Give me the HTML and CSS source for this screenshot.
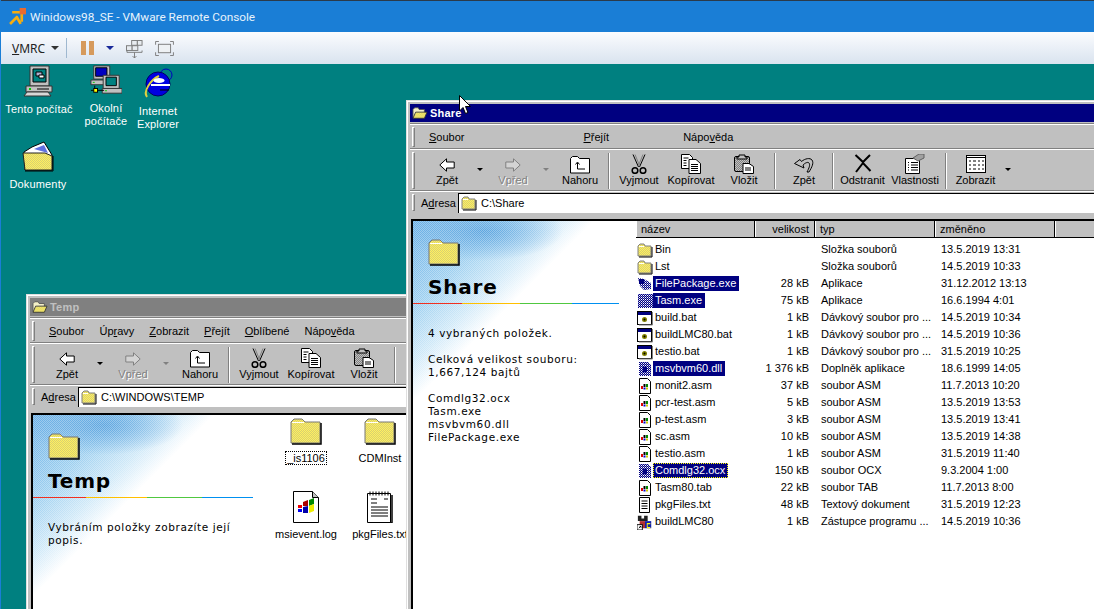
FILE: index.html
```
<!DOCTYPE html>
<html lang="cs">
<head>
<meta charset="utf-8">
<title>Winidows98_SE - VMware Remote Console</title>
<link rel="stylesheet" href="styles.css">
</head>
<body>
<svg class="defs" aria-hidden="true">
  <defs>
    <pattern id="dy" width="2" height="2" patternUnits="userSpaceOnUse"><rect width="2" height="2" fill="#fff060"/><rect width="1" height="1" fill="#d8d070"/><rect x="1" y="1" width="1" height="1" fill="#d8d070"/></pattern>
    <pattern id="db" width="2" height="2" patternUnits="userSpaceOnUse"><rect width="2" height="2" fill="#000080"/><rect width="1" height="1" fill="#fff"/><rect x="1" y="1" width="1" height="1" fill="#9090d0"/></pattern>
    <pattern id="dgray" width="2" height="2" patternUnits="userSpaceOnUse"><rect width="2" height="2" fill="#808080"/><rect width="1" height="1" fill="#c0c0c0"/><rect x="1" y="1" width="1" height="1" fill="#c0c0c0"/></pattern>
    <symbol id="folder" viewBox="0 0 16 16"><path d="M1 14V4l2-2h4l1 2h6v10z" fill="url(#dy)" stroke="#808080"/><path d="M2 15h13V5" fill="none" stroke="#000"/><path d="M2 4.500h5" stroke="#fff"/></symbol>
    <symbol id="folder-open" viewBox="0 0 18 16"><path d="M1 13V4l2-2h4l1 2h6v9z" fill="#f4f0c8" stroke="#555"/><path d="M1 14l3-7h13l-3 7z" fill="url(#dy)" stroke="#333"/></symbol>
    <symbol id="folder-big" viewBox="0 0 32 28"><path d="M1 26V5l3-3h8l3 3h15v21z" fill="url(#dy)" stroke="#777"/><path d="M2 5.500h12" stroke="#fff"/><path d="M2 27h29V6" fill="none" stroke="#000" stroke-width="1.500"/></symbol>
    <symbol id="back" viewBox="0 0 16 14"><path d="M.8 7L7.500.8v3.200h7.700v6H7.500v3.200z" fill="#fff" stroke="#000"/></symbol>
    <symbol id="fwd" viewBox="0 0 16 14"><path d="M15.200 7L8.500.8v3.200H.8v6h7.700v3.200z" fill="#d4d4d4" stroke="#808080"/></symbol>
    <symbol id="up" viewBox="0 0 20 18"><path d="M.5 17V2.500l2-2h5l2 2h10v14.500z" fill="#fff" stroke="#000"/><path d="M7.500 7v6H15M5.500 8.500l2-2.500 2 2.500" fill="none" stroke="#000"/></symbol>
    <symbol id="cut" viewBox="0 0 16 20"><g fill="none" stroke="#000"><path d="M2 .5l5.500 12.500M14 .5L8.500 13"/><path d="M4 .5l4.500 11M12 .5L7.500 11.500" stroke="#808080"/><circle cx="4" cy="16.500" r="2.800" stroke-width="1.500"/><circle cx="12" cy="16.500" r="2.800" stroke-width="1.500"/></g></symbol>
    <symbol id="copy" viewBox="0 0 20 20"><path d="M.5.500h8l3 3v11H.5z" fill="#fff" stroke="#000"/><path d="M8 5.500h7l4.500 4v10H8z" fill="#fff" stroke="#000"/><path d="M2.500 4h5M2.500 6.500h3M2.500 9h3M2.500 11.500h3M10 10.500h7M10 12.500h7M10 14.500h7M10 16.500h7" stroke="#000"/></symbol>
    <symbol id="paste" viewBox="0 0 20 20"><rect x=".5" y="2.500" width="15" height="15" rx="1.500" fill="url(#dgray)" stroke="#000"/><path d="M5 3V1h6v2h2v2H3V3z" fill="#c0c0c0" stroke="#000"/><path d="M9 9.500h6l4.500 3v7H9z" fill="#fff" stroke="#000"/><path d="M11 14h6M11 16h6" stroke="#000"/></symbol>
    <symbol id="undo" viewBox="0 0 20 16"><path d="M.5 6.500L6 2.500l1.500 2C11 1.500 16 .5 18 3c2 3 0 7-3 12h-2c2-4 3.500-7 2-9-1-1.500-4 0-6 2l1 3z" fill="#c0c0c0" stroke="#000"/></symbol>
    <symbol id="del" viewBox="0 0 18 18"><path d="M1.500.5L9 7.500 16 .5M2 17.500L9 8.500l7.500 8" fill="none" stroke="#000" stroke-width="2"/></symbol>
    <symbol id="props" viewBox="0 0 20 20"><path d="M.5 4.500h14v15H.5z" fill="#fff" stroke="#000"/><path d="M3 8.500h1M6 8.500h7M3 11h1M6 11h7M3 13.500h1M6 13.500h7M3 16h1M6 16h7" stroke="#000"/><path d="M8 4l6-4h5v4l-6 3z" fill="#a0a0a0" stroke="#606060"/></symbol>
    <symbol id="views" viewBox="0 0 20 18"><rect x=".5" y=".5" width="19" height="17" fill="#fff" stroke="#000"/><path d="M1 2.500h18" stroke="#000"/><path d="M3 6h2M7 6h3M12 6h2M16 6h2M3 10h2M7 10h3M12 10h2M16 10h2M3 14h2M7 14h3M12 14h2M16 14h2" stroke="#000"/></symbol>
    <symbol id="bat" viewBox="0 0 16 16"><rect x=".5" y="1.500" width="14" height="13" fill="#fff" stroke="#000"/><path d="M1 3.500h13" stroke="#000080" stroke-width="3"/><circle cx="7.500" cy="9.500" r="2.500" fill="#808000"/><circle cx="7.500" cy="9.500" r="1" fill="#000"/><path d="M15.500 2v13H2" fill="none" stroke="#808080"/></symbol>
    <symbol id="asm" viewBox="0 0 16 16"><path d="M2.500.5h8l3 3v12h-11z" fill="#fff" stroke="#000"/><path d="M4 8h2v3H4z" fill="#d00"/><path d="M6.500 6h2v3h-2z" fill="#000"/><path d="M9 6h2v3H9z" fill="#080"/><path d="M6.500 9.500h2v2h-2z" fill="#00c"/><path d="M9 9.500h2v2H9z" fill="#cc0"/></symbol>
    <symbol id="app" viewBox="0 0 16 16"><rect x="1" y="1" width="15" height="14" fill="url(#db)"/></symbol>
    <symbol id="pkg" viewBox="0 0 16 16"><path d="M1 2l6 1 7 4v6l-7 1-4-4z" fill="url(#db)"/><path d="M2 3h5v5H2z" fill="#000080"/></symbol>
    <symbol id="dll" viewBox="0 0 16 16"><path d="M2 1h9l3 3v11H2z" fill="url(#db)"/><path d="M6 6h4v5H6z" fill="#000080"/></symbol>
    <symbol id="txt" viewBox="0 0 16 16"><path d="M2.500.5h10v15h-10z" fill="#fff" stroke="#000"/><path d="M4.500 4h6M4.500 6.500h6M4.500 9h6M4.500 11.500h6" stroke="#000"/></symbol>
    <symbol id="lnk" viewBox="0 0 18 18"><path d="M1 2h4v3h3V2h4v6H1z" fill="#222"/><path d="M3 8h6v8H3z" fill="#b03030"/><path d="M9 8h7v8H9z" fill="#1020b0"/><path d="M11 10h4v1.500h-3v3h3V16h-4z" fill="#ff0"/><rect x="0" y="12" width="6" height="6" fill="#fff" stroke="#000"/><path d="M2 16l2-2M3 14h1.500v1.500" stroke="#000" fill="none"/></symbol>
    <symbol id="pc" viewBox="0 0 32 32"><path d="M7 1h19v20H7z" fill="#c0c0c0" stroke="#333"/><path d="M10 4h13v13H10z" fill="#008080" stroke="#000"/><path d="M13 7h6v4h-6z" fill="#b0b0d0" stroke="#000"/><path d="M16 10h5v3h-5z" fill="#fff" stroke="#000"/><path d="M3 21h26v6H3z" fill="#c0c0c0" stroke="#333"/><path d="M6 23h2v2H6z" fill="#0c0"/><path d="M14 24h12" stroke="#000"/><path d="M1 31l3-4h21l3 4z" fill="#d8d8d8" stroke="#333"/></symbol>
    <symbol id="net" viewBox="0 0 34 32"><path d="M4 1h17v14H4z" fill="#c0c0c0" stroke="#333"/><path d="M6 3h12v9H6z" fill="#0000c0" stroke="#000"/><path d="M1 16h20v5H1z" fill="#c0c0c0" stroke="#333"/><path d="M3 18h2v1H3z" fill="#0c0"/><path d="M14 11h17v14H14z" fill="#c0c0c0" stroke="#333"/><path d="M17 13h11v9H17z" fill="#008080" stroke="#000"/><path d="M13 25h21v5H13z" fill="#c0c0c0" stroke="#333"/><path d="M16 27h2v1h-2z" fill="#0c0"/><path d="M1 27h14" stroke="#000"/><path d="M5 22v4" stroke="#000"/><rect x="4" y="25" width="4" height="4" fill="#ff0" stroke="#000"/></symbol>
    <symbol id="ie" viewBox="0 0 32 32"><ellipse cx="24" cy="8" rx="6" ry="6" fill="none" stroke="#0000c0"/><circle cx="16" cy="17" r="12" fill="#0000e0" stroke="#000060"/><path d="M5 30c-4-5 3-17 12-21" fill="none" stroke="#e0d040" stroke-width="2"/><ellipse cx="17" cy="13.500" rx="5.500" ry="2.500" fill="#fff"/><path d="M9 18h19" stroke="#fff" stroke-width="2"/><path d="M18 23h9" stroke="#000" stroke-width="1"/></symbol>
    <symbol id="docs" viewBox="0 0 32 32"><path d="M2 12l8-5 12-5 8 13v15H3z" fill="#fff" stroke="#000"/><path d="M12 9l10-4 4 8z" fill="#6070e0"/><path d="M1 13h22l7 3v14H3z" fill="url(#dy)" stroke="#222"/><path d="M3 31h28V16" fill="none" stroke="#000"/></symbol>
    <symbol id="msi" viewBox="0 0 26 32"><path d="M.5.500h19l6 6v25H.5z" fill="#fff" stroke="#000"/><path d="M19.500.5v6h6" fill="#c0c0c0" stroke="#000"/><path d="M5 14h4v3H5z" fill="#e00"/><path d="M5 18h4v3H5z" fill="#00e"/><path d="M10 11l5-2v6h-5z" fill="#a00"/><path d="M16 9l5-2v6l-5 2z" fill="#080"/><path d="M10 16l5-1v7h-5z" fill="#00a"/><path d="M16 15l5-2v7l-5 2z" fill="#ee0"/></symbol>
    <symbol id="note" viewBox="0 0 26 32"><path d="M.5 2.500h23v29H.5z" fill="#fff" stroke="#000"/><path d="M25 4v28H3" fill="none" stroke="#000" stroke-width="1.500"/><path d="M3 .5v4M6 .5v4M9 .5v4M12 .5v4M15 .5v4M18 .5v4M21 .5v4" stroke="#000"/><path d="M4 8h6M17 8h4M4 12h6M4 16h17M4 19h17M4 22h17M4 25h17" stroke="#000"/></symbol>
    <symbol id="vmrc" viewBox="0 0 16 16"><path d="M1 15l7-7M3 4h9v9M7 8l4 7" fill="none" stroke="#f5ad10" stroke-width="2.500"/><rect x="10" y="0" width="6" height="6" fill="#e86a30"/></symbol>
    <symbol id="unity" viewBox="0 0 18 20"><g fill="#e8ecf0" stroke="#7a7a7a"><rect x="6" y=".5" width="6" height="5"/><rect x="12" y=".5" width="5" height="5"/><rect x=".5" y="6" width="6" height="5"/><rect x="6.500" y="6" width="6" height="5"/></g><path d="M1 11v2h16v-2M9 13v6M7 17l2 2 2-2" fill="none" stroke="#7a7a7a"/></symbol>
    <symbol id="fullscreen" viewBox="0 0 20 16"><rect x="3.500" y="3.500" width="13" height="9" fill="#eef1f4" stroke="#7a7a7a"/><path d="M.5 4V.5H4M16 .5h3.500V4M19.500 12v3.500H16M4 15.500H.5V12" fill="none" stroke="#7a7a7a"/></symbol>
  </defs>
</svg>

<div class="app">
  <header class="app-title">
    <svg class="app-logo"><use href="#vmrc"/></svg>
    <span>Winidows98_SE - VMware Remote Console</span>
  </header>
  <nav class="app-bar">
    <span class="vmrc-menu"><u>V</u>MRC</span>
    <span class="caret caret-dark"></span>
    <span class="app-sep"></span>
    <span class="pause"><i></i><i></i></span>
    <span class="caret caret-blue"></span>
    <svg class="app-ic unity"><use href="#unity"/></svg>
    <svg class="app-ic full"><use href="#fullscreen"/></svg>
  </nav>

  <main class="desktop">
    <div class="dicon pos-pc"><svg class="d32"><use href="#pc"/></svg><span>Tento počítač</span></div>
    <div class="dicon pos-net"><svg class="d32"><use href="#net"/></svg><span>Okolní<br>počítače</span></div>
    <div class="dicon pos-ie"><svg class="d32"><use href="#ie"/></svg><span>Internet<br>Explorer</span></div>
    <div class="dicon pos-doc"><svg class="d32"><use href="#docs"/></svg><span>Dokumenty</span></div>

    <section class="win win-temp">
      <div class="titlebar inactive"><svg class="ti"><use href="#folder-open"/></svg><b>Temp</b></div>
      <div class="band menu"><i class="grip"></i>
        <span><u>S</u>oubor</span><span>Úp<u>r</u>avy</span><span><u>Z</u>obrazit</span><span><u>P</u>řejít</span><span><u>O</u>blíbené</span><span>Nápo<u>v</u>ěda</span>
      </div>
      <div class="band tools"><i class="grip"></i>
        <div class="tb w48"><svg class="i-arrow"><use href="#back"/></svg><span>Zpět</span></div><div class="dd"></div>
        <div class="tb w48 off"><svg class="i-arrow"><use href="#fwd"/></svg><span>Vpřed</span></div><div class="dd off"></div>
        <div class="tb w50"><svg class="i-up"><use href="#up"/></svg><span>Nahoru</span></div><i class="sep"></i>
        <div class="tb"><svg class="i-cut"><use href="#cut"/></svg><span>Vyjmout</span></div>
        <div class="tb"><svg class="i-20"><use href="#copy"/></svg><span>Kopírovat</span></div>
        <div class="tb w54"><svg class="i-20"><use href="#paste"/></svg><span>Vložit</span></div><i class="sep"></i>
      </div>
      <div class="band addr"><i class="grip"></i><span class="addr-label">A<u>d</u>resa</span>
        <div class="addr-box"><svg class="fi"><use href="#folder"/></svg><span>C:\WINDOWS\TEMP</span></div>
      </div>
      <div class="pane">
        <aside class="side">
          <svg class="side-folder"><use href="#folder-big"/></svg>
          <h1>Temp</h1>
          <div class="rainbow"></div>
          <p>Vybráním položky zobrazíte její<br>popis.</p>
        </aside>
        <div class="icons">
          <div class="gi"><svg class="g-folder"><use href="#folder-big"/></svg><span class="focus">_is1106</span></div>
          <div class="gi"><svg class="g-folder"><use href="#folder-big"/></svg><span>CDMInst</span></div>
          <div class="gi"><svg class="g-file"><use href="#msi"/></svg><span>msievent.log</span></div>
          <div class="gi"><svg class="g-file"><use href="#note"/></svg><span>pkgFiles.txt</span></div>
        </div>
      </div>
    </section>

    <section class="win win-share">
      <div class="titlebar"><svg class="ti"><use href="#folder-open"/></svg><b>Share</b></div>
      <div class="band menu"><i class="grip"></i>
        <span><u>S</u>oubor</span><i class="gap-a"></i><span><u>P</u>řejít</span><i class="gap-b"></i><span>Nápo<u>v</u>ěda</span>
      </div>
      <div class="band tools"><i class="grip"></i>
        <div class="tb w48"><svg class="i-arrow"><use href="#back"/></svg><span>Zpět</span></div><div class="dd"></div>
        <div class="tb w48 off"><svg class="i-arrow"><use href="#fwd"/></svg><span>Vpřed</span></div><div class="dd off"></div>
        <div class="tb w50"><svg class="i-up"><use href="#up"/></svg><span>Nahoru</span></div><i class="sep"></i>
        <div class="tb"><svg class="i-cut"><use href="#cut"/></svg><span>Vyjmout</span></div>
        <div class="tb"><svg class="i-20"><use href="#copy"/></svg><span>Kopírovat</span></div>
        <div class="tb w54"><svg class="i-20"><use href="#paste"/></svg><span>Vložit</span></div><i class="sep"></i>
        <div class="tb w50"><svg class="i-undo"><use href="#undo"/></svg><span>Zpět</span></div><i class="sep"></i>
        <div class="tb w51"><svg class="i-del"><use href="#del"/></svg><span>Odstranit</span></div>
        <div class="tb w54"><svg class="i-20"><use href="#props"/></svg><span>Vlastnosti</span></div><i class="sep"></i>
        <div class="tb w51"><svg class="i-views"><use href="#views"/></svg><span>Zobrazit</span></div><div class="dd dd-end"></div>
      </div>
      <div class="band addr"><i class="grip"></i><span class="addr-label">A<u>d</u>resa</span>
        <div class="addr-box"><svg class="fi"><use href="#folder"/></svg><span>C:\Share</span></div>
      </div>
      <div class="pane">
        <aside class="side">
          <svg class="side-folder"><use href="#folder-big"/></svg>
          <h1>Share</h1>
          <div class="rainbow"></div>
          <p>4 vybraných položek.<br><br>Celková velikost souboru:<br>1,667,124 bajtů<br><br>Comdlg32.ocx<br>Tasm.exe<br>msvbvm60.dll<br>FilePackage.exe</p>
        </aside>
        <div class="list">
          <div class="head"><span>název</span><span class="num">velikost</span><span>typ</span><span>změněno</span><span></span></div>
          <div class="row"><span class="n"><svg class="fi"><use href="#folder"/></svg><em>Bin</em></span><span class="num"></span><span>Složka souborů</span><span>13.5.2019 13:31</span></div>
          <div class="row"><span class="n"><svg class="fi"><use href="#folder"/></svg><em>Lst</em></span><span class="num"></span><span>Složka souborů</span><span>14.5.2019 10:33</span></div>
          <div class="row"><span class="n sel"><svg class="fi"><use href="#pkg"/></svg><em>FilePackage.exe</em></span><span class="num">28 kB</span><span>Aplikace</span><span>31.12.2012 13:13</span></div>
          <div class="row"><span class="n sel"><svg class="fi"><use href="#app"/></svg><em>Tasm.exe</em></span><span class="num">75 kB</span><span>Aplikace</span><span>16.6.1994 4:01</span></div>
          <div class="row"><span class="n"><svg class="fi"><use href="#bat"/></svg><em>build.bat</em></span><span class="num">1 kB</span><span>Dávkový soubor pro ...</span><span>14.5.2019 10:34</span></div>
          <div class="row"><span class="n"><svg class="fi"><use href="#bat"/></svg><em>buildLMC80.bat</em></span><span class="num">1 kB</span><span>Dávkový soubor pro ...</span><span>14.5.2019 10:36</span></div>
          <div class="row"><span class="n"><svg class="fi"><use href="#bat"/></svg><em>testio.bat</em></span><span class="num">1 kB</span><span>Dávkový soubor pro ...</span><span>31.5.2019 10:25</span></div>
          <div class="row"><span class="n sel"><svg class="fi"><use href="#dll"/></svg><em>msvbvm60.dll</em></span><span class="num">1 376 kB</span><span>Doplněk aplikace</span><span>18.6.1999 14:05</span></div>
          <div class="row"><span class="n"><svg class="fi"><use href="#asm"/></svg><em>monit2.asm</em></span><span class="num">37 kB</span><span>soubor ASM</span><span>11.7.2013 10:20</span></div>
          <div class="row"><span class="n"><svg class="fi"><use href="#asm"/></svg><em>pcr-test.asm</em></span><span class="num">5 kB</span><span>soubor ASM</span><span>13.5.2019 13:53</span></div>
          <div class="row"><span class="n"><svg class="fi"><use href="#asm"/></svg><em>p-test.asm</em></span><span class="num">3 kB</span><span>soubor ASM</span><span>13.5.2019 13:41</span></div>
          <div class="row"><span class="n"><svg class="fi"><use href="#asm"/></svg><em>sc.asm</em></span><span class="num">10 kB</span><span>soubor ASM</span><span>13.5.2019 14:38</span></div>
          <div class="row"><span class="n"><svg class="fi"><use href="#asm"/></svg><em>testio.asm</em></span><span class="num">1 kB</span><span>soubor ASM</span><span>31.5.2019 11:40</span></div>
          <div class="row"><span class="n sel cur"><svg class="fi"><use href="#dll"/></svg><em>Comdlg32.ocx</em></span><span class="num">150 kB</span><span>soubor OCX</span><span>9.3.2004 1:00</span></div>
          <div class="row"><span class="n"><svg class="fi"><use href="#asm"/></svg><em>Tasm80.tab</em></span><span class="num">22 kB</span><span>soubor TAB</span><span>11.7.2013 8:00</span></div>
          <div class="row"><span class="n"><svg class="fi"><use href="#txt"/></svg><em>pkgFiles.txt</em></span><span class="num">48 kB</span><span>Textový dokument</span><span>31.5.2019 12:23</span></div>
          <div class="row"><span class="n"><svg class="fi"><use href="#lnk"/></svg><em>buildLMC80</em></span><span class="num">1 kB</span><span>Zástupce programu ...</span><span>14.5.2019 10:36</span></div>
        </div>
      </div>
    </section>

    <svg class="cursor" viewBox="0 0 12 20"><path d="M.5.500v15.500l3.500-3.500 2.500 6 2.500-1-2.500-6h5z" fill="#fff" stroke="#000"/></svg>
  </main>
</div>
</body>
</html>
```
FILE: styles.css
```
* { box-sizing: border-box; }
html, body { margin: 0; padding: 0; height: 100%; overflow: hidden; }
body { font-family: "Liberation Sans", Arial, sans-serif; font-size: 11px; color: #000; }
.defs { position: absolute; width: 0; height: 0; }
svg { display: block; }
em { font-style: normal; }
i { font-style: normal; }

.app { display: flex; flex-direction: column; height: 609px; width: 1094px; border-left: 1px solid #1a7ed6; }
.app-title { height: 32px; flex: none; background: #1a7ed6; border-top: 1px solid #2b3a4a; color: #e6f2fb; display: flex; align-items: center; padding-left: 8px; font-family: Roboto, sans-serif; font-size: 11.800px; gap: 4px; }
.app-logo { width: 17px; height: 17px; }
.app-bar { height: 32px; flex: none; background: linear-gradient(#fbfcfe, #d9e3ef); display: flex; align-items: center; padding-left: 11px; font-family: "Noto Sans", sans-serif; font-size: 12px; color: #222; }
.vmrc-menu { width: 35px; }
.caret { width: 0; height: 0; border-left: 4px solid transparent; border-right: 4px solid transparent; border-top: 4px solid #333; }
.caret-dark { margin-left: 4px; }
.caret-blue { border-top-color: #1a2a9a; margin-left: 12px; }
.app-sep { width: 1px; height: 20px; background: #9fb8d0; margin: 0 14px 0 7px; }
.pause { display: flex; gap: 3px; }
.pause i { width: 5px; height: 14px; background: #d69a5c; }
.app-ic { flex: none; }
.unity { width: 17px; height: 19px; margin: 3px 0 0 12px; }
.full { width: 19px; height: 15px; margin-left: 12px; }

.desktop { flex: 1; background: #008080; position: relative; overflow: hidden; }
.dicon { position: absolute; display: flex; flex-direction: column; align-items: center; color: #fff; text-align: center; width: 76px; line-height: 13px; letter-spacing: .15px; }
.d32 { width: 32px; height: 32px; margin-bottom: 6px; }
.pos-pc { left: 0; top: 1px; }
.pos-net { left: 67px; top: 0; }
.pos-ie { left: 119px; top: 3px; }
.pos-doc { left: -1px; top: 76px; }

.win { position: absolute; background: #c0c0c0; border-left: 1px solid #dfdfdf; border-top: 1px solid #dfdfdf; box-shadow: inset 1px 1px 0 #fff; padding: 3px 0 0 3px; display: flex; flex-direction: column; width: 720px; height: 560px; }
.win-temp { left: 25px; top: 230px; }
.win-share { left: 405px; top: 36px; }
.titlebar { height: 18px; flex: none; background: #000080; color: #fff; display: flex; align-items: center; padding-left: 2px; gap: 2px; font-size: 11px; }
.titlebar b { font-weight: 700; letter-spacing: .2px; }
.titlebar.inactive { background: #808080; color: #c0c0c0; }
.ti { width: 16px; height: 14px; }

.band { display: flex; align-items: center; flex: none; border-top: 1px solid #fff; box-shadow: 0 -1px 0 #808080; position: relative; }
.grip { width: 3px; align-self: stretch; margin: 2px 0 2px 2px; border: 1px solid; border-color: #fff #808080 #808080 #fff; flex: none; }
.menu { height: 25px; margin-top: 2px; }
.menu span { margin-right: 15px; white-space: nowrap; }
.menu .grip + span { margin-left: 14px; }
.gap-a { width: 104px; }
.gap-b { width: 59px; }
.tools { height: 42px; }
.tools > .grip { margin-right: 8px; }
.tb { width: 52px; height: 100%; display: flex; flex-direction: column; align-items: center; flex: none; padding-top: 4px; white-space: nowrap; }
.tb svg { margin: 0 auto; }
.tb span { position: absolute; bottom: 5px; }
.w48 { width: 48px; }
.w50 { width: 50px; }
.w51 { width: 51px; }
.w54 { width: 54px; }
.off { color: #808080; text-shadow: 1px 1px 0 #fff; }
.dd { width: 18px; flex: none; align-self: stretch; position: relative; }
.dd::after { content: ""; position: absolute; left: 6px; top: 18px; border-left: 3px solid transparent; border-right: 3px solid transparent; border-top: 3px solid #000; }
.dd.off::after { border-top-color: #808080; }
.dd-end { margin-left: -2px; }
.sep { width: 2px; height: 36px; border-left: 1px solid #808080; border-right: 1px solid #fff; margin: 0 3px; flex: none; }
.i-arrow { width: 16px; height: 14px; margin-top: 4px !important; }
.i-up { width: 20px; height: 18px; margin-top: 2px !important; }
.i-cut { width: 16px; height: 20px; }
.i-20 { width: 20px; height: 20px; }
.i-views { width: 20px; height: 18px; margin-top: 1px !important; }
.i-undo { width: 20px; height: 16px; margin-top: 3px !important; }
.i-del { width: 18px; height: 19px; }

.addr { height: 22px; }
.addr-label { padding-left: 6px; width: 43px; flex: none; }
.addr-box { flex: 1; height: 20px; background: #fff; border-top: 1px solid #000; border-left: 1px solid #000; display: flex; align-items: center; padding-left: 2px; gap: 4px; }
.fi { width: 16px; height: 16px; flex: none; }

.pane { flex: 1; display: flex; background: #fff; margin: 6px 0 0 1px; border-top: 2px solid #000; border-left: 2px solid #000; min-height: 0; }
.side { width: 223px; flex: none; padding: 17px 0 0 15px; background: conic-gradient(#ffffff50 25%, transparent 0 50%, #ffffff50 0 75%, transparent 0) 0 0 / 2px 2px, radial-gradient(80px 30px at 70px 10px, #5ea6e0, #5ea6e000), linear-gradient(135deg, #6cb0e6 0, #9ed0f0 62px, #d0e9f8 100px, #fff 128px); font-family: "DejaVu Sans", sans-serif; font-size: 10.500px; line-height: 13px; letter-spacing: .6px; }
.win-temp .side { width: 236px; }
.side-folder { width: 32px; height: 28px; }
.side h1 { margin: 8px 0 0; font-family: "DejaVu Sans", sans-serif; font-size: 20px; font-weight: 700; line-height: 26px; letter-spacing: .8px; }
.rainbow { height: 1px; margin: 3px 0 23px -15px; width: 206px; background: linear-gradient(90deg, #f03020 0 24%, #ffc000 24% 52%, #50c840 52% 77%, #0090f0 77%); }
.win-temp .rainbow { width: 220px; }
.side p { margin: 0; white-space: nowrap; }

.icons { display: grid; grid-template-columns: 74px 74px; grid-auto-rows: 74px; padding-top: 2px; }
.gi { display: flex; flex-direction: column; align-items: center; gap: 7px; white-space: nowrap; }
.g-folder { width: 32px; height: 28px; }
.g-file { width: 26px; height: 32px; margin-bottom: -2px; }
.focus { outline: 1px dotted #000; padding: 0 1px; }

.list { flex: 1; font-size: 11px; }
.head, .row { display: grid; grid-template-columns: 119px 60px 120px 120px 40px; }
.head { height: 17px; background: #c0c0c0; border-bottom: 1px solid #000; margin-bottom: 3px; }
.head span { border-left: 1px solid #fff; border-right: 1px solid #000; padding: 1px 5px 1px 4px; line-height: 14px; }
.head .num { text-align: right; }
.row { height: 17px; line-height: 17px; white-space: nowrap; }
.row > span { padding-left: 6px; }
.row .num { padding: 0 6px 0 0; text-align: right; }
.row .n { padding-left: 1px; display: flex; align-items: center; }
.row .n em { padding: 0 2px; line-height: 15px; }
.sel em { background: #000080; color: #fff; padding: 0 3px 0 2px !important; }
.cur em { outline: 1px dotted #ff0; outline-offset: -1px; }

.cursor { position: absolute; left: 458px; top: 31px; width: 12px; height: 20px; }
```
